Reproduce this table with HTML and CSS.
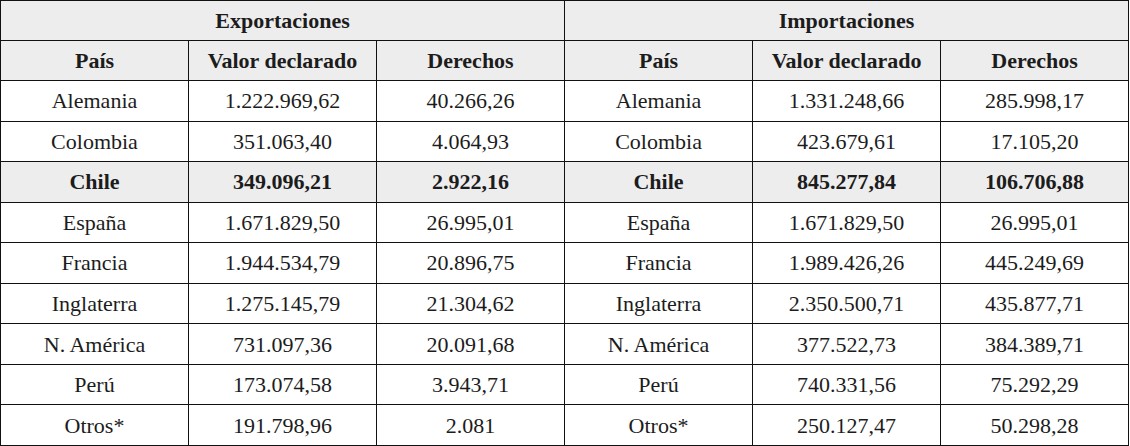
FILE: index.html
```html
<!DOCTYPE html>
<html lang="es">
<head>
<meta charset="utf-8">
<link rel="stylesheet" href="styles.css">
</head>
<body>
<table class="trade">
  <colgroup>
    <col class="c"><col class="c"><col class="c"><col class="c"><col class="c"><col class="c">
  </colgroup>
  <thead>
    <tr class="head">
      <th colspan="3">Exportaciones</th>
      <th colspan="3">Importaciones</th>
    </tr>
    <tr class="head">
      <th>País</th><th>Valor declarado</th><th>Derechos</th>
      <th>País</th><th>Valor declarado</th><th>Derechos</th>
    </tr>
  </thead>
  <tbody>
    <tr><td>Alemania</td><td>1.222.969,62</td><td>40.266,26</td><td>Alemania</td><td>1.331.248,66</td><td>285.998,17</td></tr>
    <tr><td>Colombia</td><td>351.063,40</td><td>4.064,93</td><td>Colombia</td><td>423.679,61</td><td>17.105,20</td></tr>
    <tr class="hl"><td>Chile</td><td>349.096,21</td><td>2.922,16</td><td>Chile</td><td>845.277,84</td><td>106.706,88</td></tr>
    <tr><td>España</td><td>1.671.829,50</td><td>26.995,01</td><td>España</td><td>1.671.829,50</td><td>26.995,01</td></tr>
    <tr><td>Francia</td><td>1.944.534,79</td><td>20.896,75</td><td>Francia</td><td>1.989.426,26</td><td>445.249,69</td></tr>
    <tr><td>Inglaterra</td><td>1.275.145,79</td><td>21.304,62</td><td>Inglaterra</td><td>2.350.500,71</td><td>435.877,71</td></tr>
    <tr><td>N. América</td><td>731.097,36</td><td>20.091,68</td><td>N. América</td><td>377.522,73</td><td>384.389,71</td></tr>
    <tr><td>Perú</td><td>173.074,58</td><td>3.943,71</td><td>Perú</td><td>740.331,56</td><td>75.292,29</td></tr>
    <tr><td>Otros*</td><td>191.798,96</td><td>2.081</td><td>Otros*</td><td>250.127,47</td><td>50.298,28</td></tr>
  </tbody>
</table>
</body>
</html>
```

FILE: styles.css
```css
html, body {
  margin: 0;
  padding: 0;
  background: #ffffff;
}
.trade {
  border-collapse: collapse;
  table-layout: fixed;
  width: 1129px;
  height: 446px;
  font-family: "Liberation Serif", "Times New Roman", serif;
  font-size: 22px;
  color: #1c1c1c;
}
.trade .c {
  width: 188px;
}
.trade th,
.trade td {
  border: 1px solid #111111;
  text-align: center;
  vertical-align: middle;
  padding: 0;
  height: 39px;
  line-height: 39px;
  white-space: nowrap;
}
.trade th {
  font-weight: bold;
  background: #ededed;
}
.trade tr.hl td {
  background: #ededed;
  font-weight: bold;
}
```
